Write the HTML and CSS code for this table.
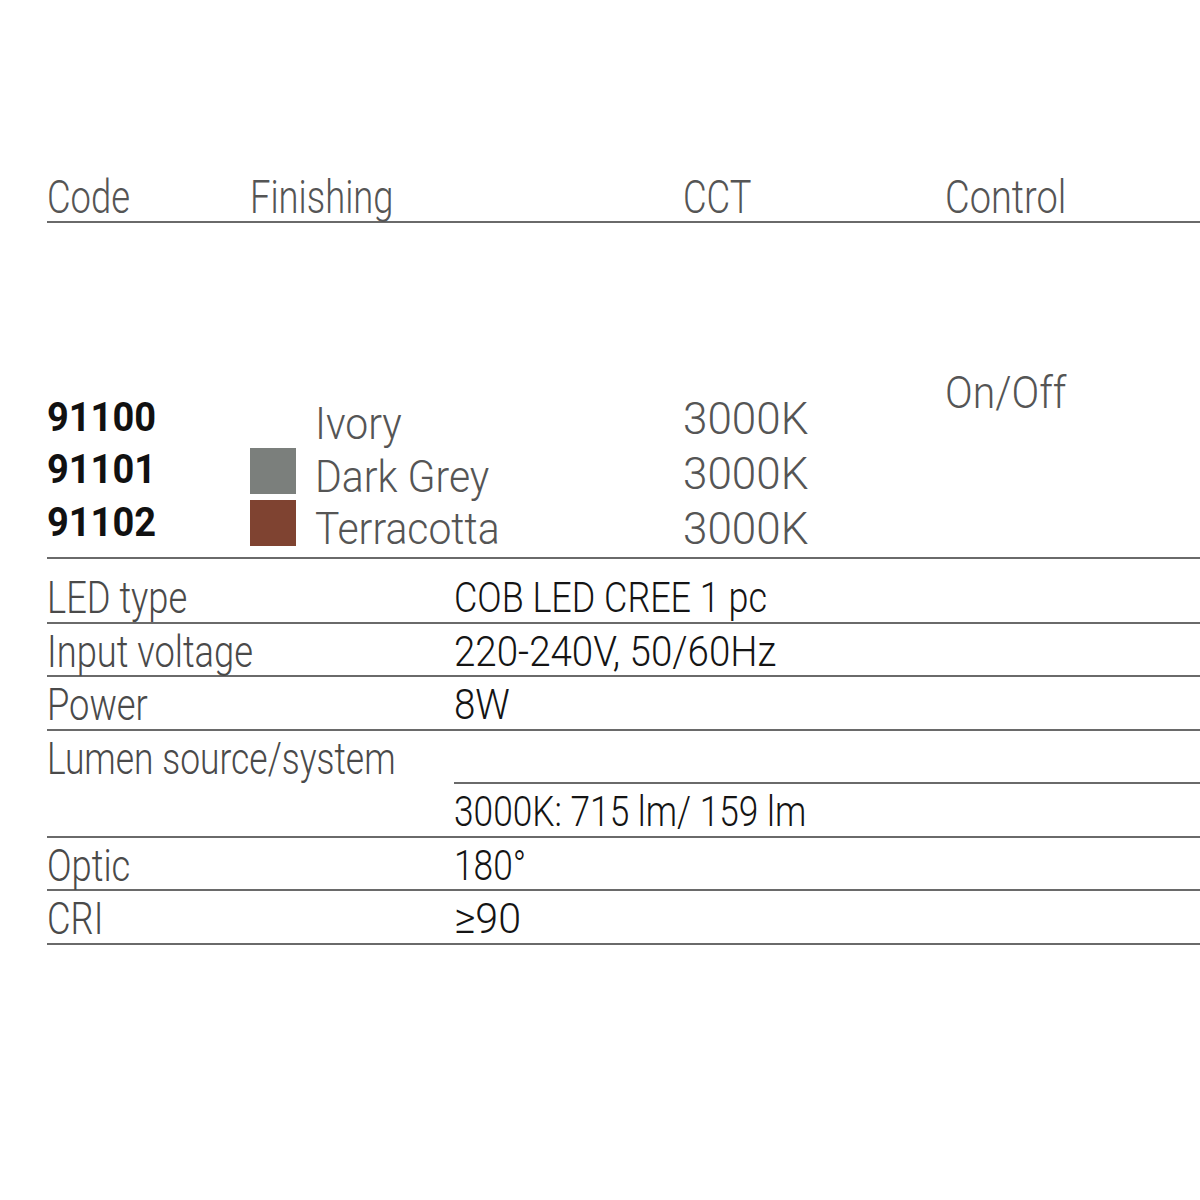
FILE: index.html
```html
<!DOCTYPE html>
<html lang="en">
<head>
<meta charset="utf-8">
<title>91100 series – technical data</title>
<link rel="stylesheet" href="styles.css">
</head>
<body>
<div class="sheet">
  <div class="head grid4">
    <div class="cell"><span class="sq">Code</span></div>
    <div class="cell"><span class="sq">Finishing</span></div>
    <div class="cell"><span class="sq">CCT</span></div>
    <div class="cell"><span class="sq wide">Control</span></div>
  </div>

  <div class="models grid4">
    <div class="codes">
      <div class="code"><span class="sq num">91100</span></div>
      <div class="code"><span class="sq num">91101</span></div>
      <div class="code"><span class="sq num">91102</span></div>
    </div>
    <div class="finishes">
      <div class="finish"><span class="swatch swatch-ivory"></span><span class="sq open">Ivory</span></div>
      <div class="finish"><span class="swatch swatch-grey"></span><span class="sq open">Dark Grey</span></div>
      <div class="finish"><span class="swatch swatch-terracotta"></span><span class="sq open">Terracotta</span></div>
    </div>
    <div class="ccts">
      <div class="cct"><span class="sq num">3000K</span></div>
      <div class="cct"><span class="sq num">3000K</span></div>
      <div class="cct"><span class="sq num">3000K</span></div>
    </div>
    <div class="control"><span class="sq open">On/Off</span></div>
  </div>

  <div class="specs">
    <div class="spec first">
      <div class="label"><span class="sq">LED type</span></div>
      <div class="value"><span class="sq txt">COB LED CREE 1 pc</span></div>
    </div>
    <div class="spec">
      <div class="label"><span class="sq">Input voltage</span></div>
      <div class="value"><span class="sq digits">220-240V, 50/60Hz</span></div>
    </div>
    <div class="spec">
      <div class="label"><span class="sq">Power</span></div>
      <div class="value"><span class="sq digits">8W</span></div>
    </div>
    <div class="spec split">
      <div class="label"><span class="sq long">Lumen source/system</span></div>
      <div class="value blank"></div>
      <div class="label"></div>
      <div class="value"><span class="sq mix">3000K: 715 lm/ 159 lm</span></div>
    </div>
    <div class="spec">
      <div class="label"><span class="sq">Optic</span></div>
      <div class="value"><span class="sq mix">180°</span></div>
    </div>
    <div class="spec">
      <div class="label"><span class="sq">CRI</span></div>
      <div class="value"><span class="sq sym">≥90</span></div>
    </div>
  </div>
</div>
</body>
</html>
```

FILE: styles.css
```css
html, body {
  margin: 0;
  padding: 0;
  background: #ffffff;
}

body {
  font-family: "Roboto", "Liberation Sans", sans-serif;
  font-weight: 300;
  color: #555555;
  width: 1200px;
  height: 1200px;
  overflow: hidden;
}

.sheet {
  margin-left: 47px;
  padding-top: 173px;
}

/* condensed look: the original uses a narrow DIN-like face */
.sq {
  display: inline-block;
  white-space: nowrap;
  transform: scaleX(0.79);
  transform-origin: left center;
}
.sq.wide { transform: scaleX(0.825); }
.sq.open { transform: scaleX(0.93); }
.sq.num { transform: scaleX(1); }

.grid4 {
  display: grid;
  grid-template-columns: 203px 433px 262px 1fr;
}

.head {
  font-size: 46px;
  line-height: 48px;
  border-bottom: 2px solid #6a6a6a;
}

.models {
  align-items: start;
  font-size: 44px;
  border-bottom: 2px solid #6a6a6a;
}

.codes {
  margin-top: 168.5px;
  font-size: 40px;
  font-weight: 700;
  color: #111111;
  line-height: 52.5px;
}
.codes .sq.num { transform: scaleX(0.95); }

.finishes {
  margin-top: 175.25px;
}

.finish {
  display: flex;
  align-items: flex-start;
  gap: 19px;
  height: 52.5px;
  line-height: 53px;
}

.swatch {
  flex: none;
  width: 46px;
  height: 46px;
  margin-top: -3px;
}
.swatch-ivory { background: #ffffff; }
.swatch-grey { background: #7b7f7c; }
.swatch-terracotta { background: #7f4331; }

.ccts {
  margin-top: 169px;
  line-height: 55px;
}

.control {
  margin-top: 144.7px;
  line-height: 50px;
}

.specs {
  display: flex;
  flex-direction: column;
}

.spec {
  display: grid;
  grid-template-columns: 407px 1fr;
  border-bottom: 2px solid #6a6a6a;
}

.spec > div {
  padding-top: 5px;
  height: 46.5px;
  line-height: 46.5px;
}

.spec.first > div {
  padding-top: 16px;
}

.label {
  font-size: 44px;
  font-weight: 300;
  color: #4a4a4a;
}
.label .sq { transform: scaleX(0.825); }
.label .sq.long { transform: scaleX(0.805); }

.value {
  font-size: 42px;
  font-weight: 300;
  color: #141414;
}
.value .sq.txt { transform: scaleX(0.855); }
.value .sq.digits { transform: scaleX(0.917); }
.value .sq.mix { transform: scaleX(0.84); }
.value .sq.sym { transform: scaleX(0.98); }

.spec.split .value.blank {
  border-bottom: 2px solid #6a6a6a;
}
```
